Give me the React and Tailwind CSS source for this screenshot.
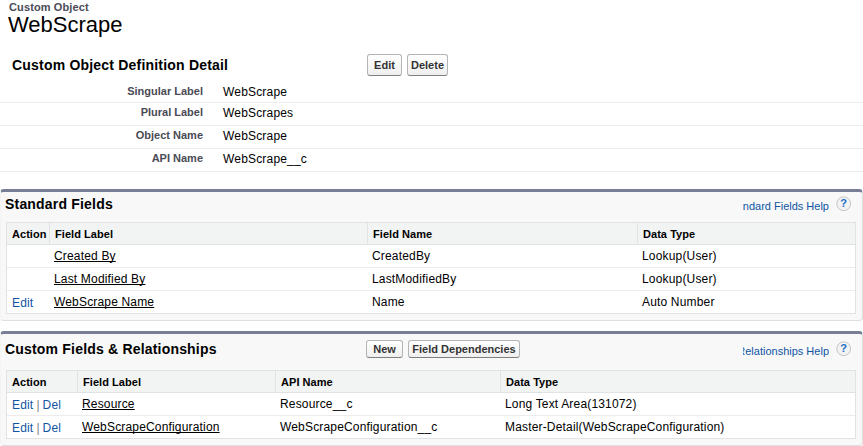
import React from "react";

function Button({ children, className }) {
  return (
    <button
      className={`flex shrink-0 justify-center whitespace-nowrap rounded-[3px] border border-[#b5b5b5] border-b-[#7f7f7f] bg-linear-to-b from-white to-[#efefef] text-[11px] leading-[12px] font-bold text-[#333] ${className}`}
    >
      {children}
    </button>
  );
}

function DetailRow({ label, value, tall }) {
  return (
    <div className={`flex border-b border-[#ececec] ${tall ? "h-[23px] pt-[5px]" : "h-[23px] pt-[3px]"}`}>
      <div className="w-[203px] text-right text-[11px] leading-[12px] font-bold text-[#4a4a56]">{label}</div>
      <div className="ml-5 text-[12px] leading-[14px] tracking-[0.18px] text-black">{value}</div>
    </div>
  );
}

function HelpLink({ text }) {
  return (
    <div className="ml-auto flex">
      <div className="mt-[7px] flex h-[14px] w-[86px] justify-end overflow-hidden whitespace-nowrap text-[11px] leading-[14px] text-[#0f55a4]">
        <span>{text}</span>
      </div>
      <svg className="mt-[4px] ml-[7px] h-4 w-4" viewBox="0 0 16 16">
        <circle cx="7.7" cy="7.7" r="6.9" fill="#f3f3f3" stroke="#c4c4c4" />
        <text x="7.7" y="11.4" textAnchor="middle" fontSize="11" fontWeight="bold" fontFamily="Liberation Sans, Arial, sans-serif" fill="#1a6fc4">?</text>
      </svg>
    </div>
  );
}

function Panel({ title, help, buttons, headClass, columns, rows }) {
  return (
    <section className="w-[863px] rounded-[4px] border border-t-[3px] border-[#dfdfe2] border-t-[#777e96] border-l-[#f4f4f4] bg-[#f8f8f8] pr-[6px] pb-[6px] pl-[5px]">
      <div className={`flex pr-[4px] ${headClass}`}>
        <h3 className="-ml-px w-[361px] whitespace-nowrap pt-[4px] text-[14px] leading-[16px] font-bold tracking-[0.19px]">{title}</h3>
        {buttons}
        <HelpLink text={help} />
      </div>
      <div className="border border-[#e0e3e5] bg-white">
        <div className="flex h-[22px] border-b border-[#e0e3e5] bg-[#f2f3f3]">
          {columns.map((c, i) => (
            <div key={c.name} className={`${c.width} whitespace-nowrap pt-[5px] pl-[5px] text-[11px] leading-[12px] font-bold tracking-[0.05px] ${i ? "border-l border-[#e0e3e5]" : ""}`}>
              {c.name}
            </div>
          ))}
        </div>
        {rows.map((r, n) => (
          <div key={r[1]} className={`flex whitespace-nowrap text-[12px] leading-[14px] tracking-[0.17px] ${n < rows.length - 1 ? "h-[23px] border-b border-[#ececec]" : "h-[22px]"}`}>
            {r.map((cell, i) => (
              <div key={i} className={`${columns[i].width} pl-[5px] ${i ? "pt-[4px]" : "pt-[5px] text-[#0f55a4]"}`}>
                {i === 1 ? <a className="underline decoration-1 underline-offset-[1px] [text-decoration-skip-ink:none]">{cell}</a> : cell}
              </div>
            ))}
          </div>
        ))}
      </div>
    </section>
  );
}

const links = (
  <>
    Edit<span className="tracking-[-0.2px] text-[#808080]"> | </span>Del
  </>
);

export default function App() {
  return (
    <main className="h-[446px] w-[863px] overflow-hidden bg-white font-['Liberation_Sans',Arial,sans-serif] text-black">
      <header className="h-[54px] pt-px">
        <p className="pl-[9px] text-[11px] leading-[12px] font-bold tracking-[0.12px] text-[#4a4a56]">Custom Object</p>
        <h1 className="-mt-px pl-[8px] text-[22px] leading-[25px]">WebScrape</h1>
      </header>
      <div className="flex h-[26px]">
        <h2 className="w-[355px] ml-[12px] whitespace-nowrap pt-[3px] text-[14px] leading-[16px] font-bold tracking-[0.2px]">
          Custom Object Definition Detail
        </h2>
        <Button className="h-[22px] w-[35px] pt-[4px]">Edit</Button>
        <Button className="ml-[5px] h-[22px] w-[41px] pt-[4px]">Delete</Button>
      </div>
      <DetailRow label="Singular Label" value="WebScrape" tall />
      <DetailRow label="Plural Label" value="WebScrapes" />
      <DetailRow label="Object Name" value="WebScrape" />
      <DetailRow label="API Name" value="WebScrape__c" />
      <div className="mt-[17px] flex flex-col gap-[10px]">
        <Panel
          title="Standard Fields"
          help="Standard Fields Help"
          headClass="h-[30px]"
          columns={[
            { name: "Action", width: "w-[42px]" },
            { name: "Field Label", width: "w-[318px]" },
            { name: "Field Name", width: "w-[270px]" },
            { name: "Data Type", width: "w-[218px]" },
          ]}
          rows={[
            ["", "Created By", "CreatedBy", "Lookup(User)"],
            ["", "Last Modified By", "LastModifiedBy", "Lookup(User)"],
            ["Edit", "WebScrape Name", "Name", "Auto Number"],
          ]}
        />
        <Panel
          title="Custom Fields & Relationships"
          help="Custom Fields & Relationships Help"
          headClass="h-[36px] pt-[3px]"
          buttons={
            <>
              <Button className="mt-[3px] h-[18px] w-[37px] pt-[2px]">New</Button>
              <Button className="mt-[3px] ml-[5px] h-[18px] w-[112px] pt-[2px]">Field Dependencies</Button>
            </>
          }
          columns={[
            { name: "Action", width: "w-[70px]" },
            { name: "Field Label", width: "w-[198px]" },
            { name: "API Name", width: "w-[225px]" },
            { name: "Data Type", width: "w-[355px]" },
          ]}
          rows={[
            [links, "Resource", "Resource__c", "Long Text Area(131072)"],
            [links, "WebScrapeConfiguration", "WebScrapeConfiguration__c", "Master-Detail(WebScrapeConfiguration)"],
          ]}
        />
      </div>
    </main>
  );
}
